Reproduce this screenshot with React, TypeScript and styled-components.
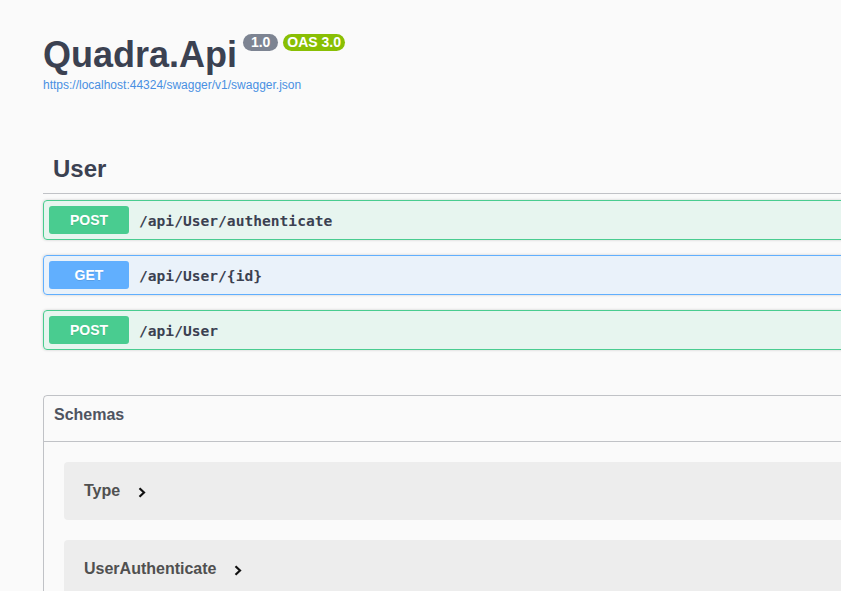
import React from "react";
import styled, { createGlobalStyle } from "styled-components";

const GlobalStyle = createGlobalStyle`
  html, body {
    margin: 0;
    padding: 0;
    background: #fafafa;
    overflow: hidden;
  }
  body {
    font-family: "Liberation Sans", Arial, sans-serif;
    color: #3b4151;
  }
`;

const Wrapper = styled.div`
  width: 1400px;
  box-sizing: border-box;
  padding: 0 20px 0 43px;
`;

const Info = styled.div`
  padding-top: 34px;
`;

const Title = styled.h2`
  display: flex;
  align-items: flex-start;
  margin: 0;
  font-size: 36px;
  font-weight: 700;
  color: #3b4151;
  line-height: 41px;
`;

const Badges = styled.span`
  display: flex;
  gap: 5px;
  margin-left: 6px;
`;

const Badge = styled.pre<{ $bg: string }>`
  margin: 0;
  padding: 2px 4px;
  border-radius: 57px;
  background: ${(p) => p.$bg};
  color: #fff;
  font-family: "Liberation Sans", Arial, sans-serif;
  font-size: 14px;
  font-weight: 700;
  line-height: 13px;
  white-space: pre;
`;

const SpecLink = styled.a`
  display: inline-block;
  margin-top: 3px;
  font-size: 12px;
  line-height: 14px;
  color: #4990e2;
  text-decoration: none;
`;

const TagSection = styled.div`
  margin-top: 52px;
`;

const TagHeader = styled.h3`
  margin: 0;
  padding: 10px 20px 10px 10px;
  font-size: 24px;
  font-weight: 700;
  line-height: 28px;
  color: #3b4151;
  border-bottom: 1px solid rgba(59, 65, 81, 0.3);
`;

const OpList = styled.div`
  display: flex;
  flex-direction: column;
  gap: 15px;
  padding-top: 6px;
`;

const methodColors: Record<string, { border: string; bg: string }> = {
  POST: { border: "#49cc90", bg: "rgba(73, 204, 144, 0.1)" },
  GET: { border: "#61affe", bg: "rgba(97, 175, 254, 0.1)" },
};

const OpBlock = styled.div<{ $method: string }>`
  display: flex;
  align-items: center;
  height: 40px;
  box-sizing: border-box;
  padding: 5px;
  border: 1px solid ${(p) => methodColors[p.$method].border};
  background: ${(p) => methodColors[p.$method].bg};
  border-radius: 4px;
  box-shadow: 0 0 3px rgba(0, 0, 0, 0.19);
`;

const Method = styled.span<{ $method: string }>`
  display: flex;
  align-items: center;
  justify-content: center;
  width: 80px;
  height: 28px;
  border-radius: 3px;
  background: ${(p) => methodColors[p.$method].border};
  color: #fff;
  font-size: 14px;
  font-weight: 700;
  text-shadow: 0 1px 0 rgba(0, 0, 0, 0.1);
`;

const Path = styled.span`
  padding: 0 10px;
  font-family: "DejaVu Sans Mono", "Liberation Mono", monospace;
  font-size: 14.6px;
  font-weight: 700;
  color: #3b4151;
`;

const Models = styled.section`
  margin-top: 45px;
  border: 1px solid rgba(59, 65, 81, 0.3);
  border-radius: 4px;
  padding-bottom: 20px;
`;

const ModelsHeader = styled.h4`
  margin: 0;
  height: 46px;
  box-sizing: border-box;
  padding: 10px 20px 0 10px;
  font-size: 16px;
  font-weight: 700;
  line-height: 18px;
  color: #4f5461;
  border-bottom: 1px solid rgba(59, 65, 81, 0.3);
`;

const ModelList = styled.div`
  display: flex;
  flex-direction: column;
  gap: 20px;
  padding: 20px 20px 0;
`;

const ModelContainer = styled.div`
  display: flex;
  align-items: center;
  height: 58px;
  padding: 0 20px;
  border-radius: 4px;
  background: rgba(0, 0, 0, 0.05);
`;

const ModelTitle = styled.span`
  font-size: 16px;
  font-weight: 700;
  color: #505050;
`;

const Toggle = styled.svg`
  margin-left: 18px;
  margin-top: 2px;
`;

const Chevron = () => (
  <Toggle width="8" height="11" viewBox="0 0 8 11">
    <polyline
      points="1.5,1.2 6,5.5 1.5,9.8"
      fill="none"
      stroke="#111"
      strokeWidth="2.2"
    />
  </Toggle>
);

const ops = [
  { method: "POST", path: "/api/User/authenticate" },
  { method: "GET", path: "/api/User/{id}" },
  { method: "POST", path: "/api/User" },
];

const schemas = ["Type", "UserAuthenticate"];

export default function App() {
  return (
    <>
      <GlobalStyle />
      <Wrapper>
        <Info>
          <Title>
            Quadra.Api
            <Badges>
              <Badge $bg="#7d8492"> 1.0 </Badge>
              <Badge $bg="#89bf04">OAS 3.0</Badge>
            </Badges>
          </Title>
          <SpecLink href="#">https://localhost:44324/swagger/v1/swagger.json</SpecLink>
        </Info>
        <TagSection>
          <TagHeader>User</TagHeader>
          <OpList>
            {ops.map((op) => (
              <OpBlock key={op.method + op.path} $method={op.method}>
                <Method $method={op.method}>{op.method}</Method>
                <Path>{op.path}</Path>
              </OpBlock>
            ))}
          </OpList>
        </TagSection>
        <Models>
          <ModelsHeader>Schemas</ModelsHeader>
          <ModelList>
            {schemas.map((s) => (
              <ModelContainer key={s}>
                <ModelTitle>{s}</ModelTitle>
                <Chevron />
              </ModelContainer>
            ))}
          </ModelList>
        </Models>
      </Wrapper>
    </>
  );
}
